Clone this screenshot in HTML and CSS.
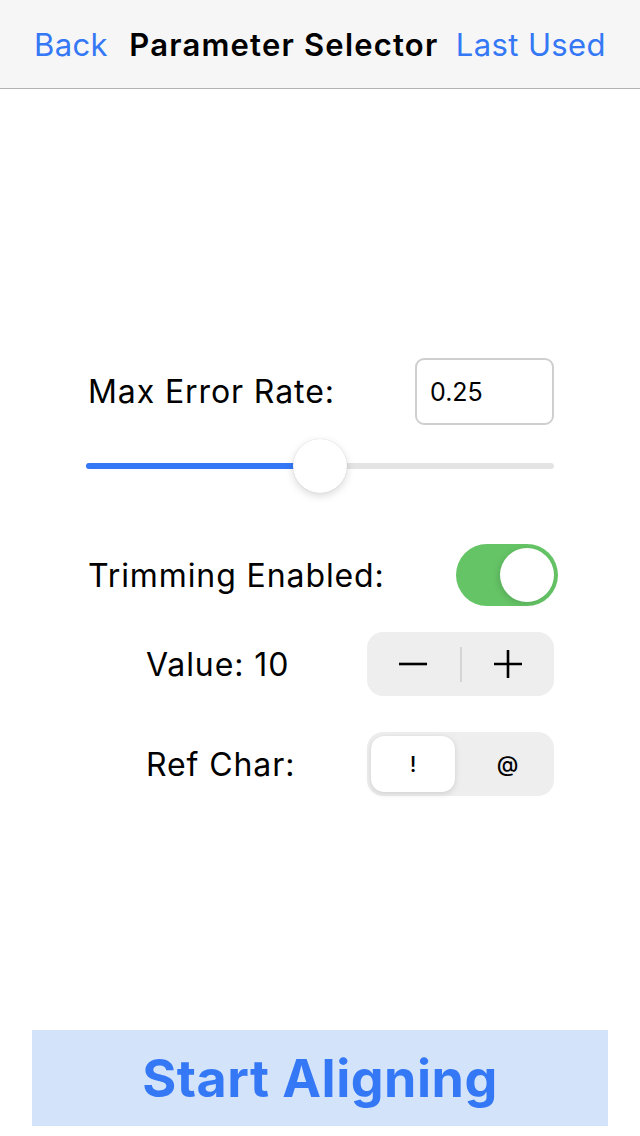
FILE: index.html
```html
<!DOCTYPE html>
<html>
<head>
<meta charset="utf-8">
<link rel="stylesheet" href="styles.css">
</head>
<body>
<div class="screen">
  <header class="navbar">
    <span class="nav-link">Back</span>
    <span class="nav-title">Parameter Selector</span>
    <span class="nav-link">Last Used</span>
  </header>
  <main class="panel">
    <div class="row row-field">
      <span class="label">Max Error Rate:</span>
      <div class="field">0.25</div>
    </div>
    <div class="slider">
      <div class="track"><div class="fill" style="width:50.1%"></div></div>
      <div class="thumb" style="left:50.1%"></div>
    </div>
    <div class="row row-toggle">
      <span class="label">Trimming Enabled:</span>
      <div class="toggle"><div class="knob"></div></div>
    </div>
    <div class="row row-sub row-stepper">
      <span class="label">Value: 10</span>
      <div class="stepper">
        <span class="step">
          <svg width="30" height="30" viewBox="0 0 30 30"><path d="M1 15H29" stroke="#000" stroke-width="2.6"/></svg>
        </span>
        <span class="divider"></span>
        <span class="step">
          <svg width="30" height="30" viewBox="0 0 30 30"><path d="M1 15H29M15 1V29" stroke="#000" stroke-width="2.6"/></svg>
        </span>
      </div>
    </div>
    <div class="row row-sub row-seg">
      <span class="label">Ref Char:</span>
      <div class="segmented">
        <span class="seg seg-on">!</span>
        <span class="seg seg-off">@</span>
      </div>
    </div>
  </main>
  <button class="cta">Start Aligning</button>
</div>
</body>
</html>
```
FILE: styles.css
```css
* { box-sizing: border-box; }
html, body { margin: 0; padding: 0; background: #fff; }
body { font-family: Inter, "Noto Sans", sans-serif; color: #000; }
.screen {
  width: 640px;
  height: 1136px;
  display: flex;
  flex-direction: column;
  overflow: hidden;
}
.navbar {
  height: 89px;
  background: #f6f6f6;
  border-bottom: 1px solid #b2b2b2;
  display: flex;
  align-items: center;
  justify-content: space-between;
  padding: 0 34px 0 34px;
  font-size: 31px;
}
.nav-link { color: #3478f6; font-weight: 400; letter-spacing: 0.4px; }
.nav-title { font-weight: 600; color: #000; letter-spacing: 1.2px; margin-left: 4px; }
.panel {
  margin-top: 269px;
  margin-left: 88px;
  width: 466px;
  display: flex;
  flex-direction: column;
}
.row {
  display: flex;
  align-items: center;
  justify-content: space-between;
}
.label { font-size: 32px; letter-spacing: 0.9px; }
.row-field { height: 67px; }
.field {
  width: 139px;
  height: 67px;
  border: 2px solid #cfcfcf;
  border-radius: 9px;
  font-size: 25px;
  display: flex;
  align-items: center;
  padding-left: 13px;
}
.slider {
  position: relative;
  height: 54px;
  margin-top: 14px;
  margin-left: -2px;
  display: flex;
  align-items: center;
}
.track {
  width: 100%;
  height: 6px;
  border-radius: 3px;
  background: #e4e4e4;
  overflow: hidden;
}
.fill { height: 100%; background: #3478f6; }
.thumb {
  position: absolute;
  top: 0;
  width: 54px;
  height: 54px;
  margin-left: -27px;
  border-radius: 50%;
  background: #fff;
  box-shadow: 0 3px 8px rgba(0,0,0,0.15), 0 0 1px rgba(0,0,0,0.2);
}
.row-toggle { margin-top: 51px; height: 62px; }
.toggle {
  width: 102px;
  height: 62px;
  border-radius: 31px;
  background: #65c466;
  margin-right: -4px;
  display: flex;
  align-items: center;
  justify-content: flex-end;
  padding-right: 4px;
}
.knob {
  width: 54px;
  height: 54px;
  border-radius: 50%;
  background: #fff;
  box-shadow: -2px 2px 6px rgba(0,0,0,0.12);
}
.row-sub { padding-left: 58px; height: 64px; }
.row-stepper { margin-top: 26px; }
.row-seg { margin-top: 36px; }
.stepper {
  width: 187px;
  height: 64px;
  border-radius: 16px;
  background: #eeeeef;
  display: flex;
  align-items: center;
}
.step {
  flex: 1;
  display: flex;
  justify-content: center;
  align-items: center;
}
.divider { width: 2px; height: 35px; background: #d4d4d6; }
.segmented {
  width: 187px;
  height: 64px;
  border-radius: 16px;
  background: #eeeeef;
  display: flex;
  align-items: center;
  padding: 4px;
}
.seg {
  flex: 1;
  height: 56px;
  display: flex;
  align-items: center;
  justify-content: center;
  font-size: 22px;
  font-weight: 500;
}
.seg-off { padding-left: 10px; }
.seg-on {
  flex: 0 0 84px;
  background: #fff;
  border-radius: 13px;
  box-shadow: 0 2px 6px rgba(0,0,0,0.12), 0 0 1px rgba(0,0,0,0.1);
}
.cta {
  margin: auto 32px 10px 32px;
  height: 96px;
  border: none;
  background: #d3e3fa;
  color: #3478f6;
  font-family: Inter, "Noto Sans", sans-serif;
  font-weight: 700;
  font-size: 52px;
  letter-spacing: 0.5px;
  padding: 0;
}
```
